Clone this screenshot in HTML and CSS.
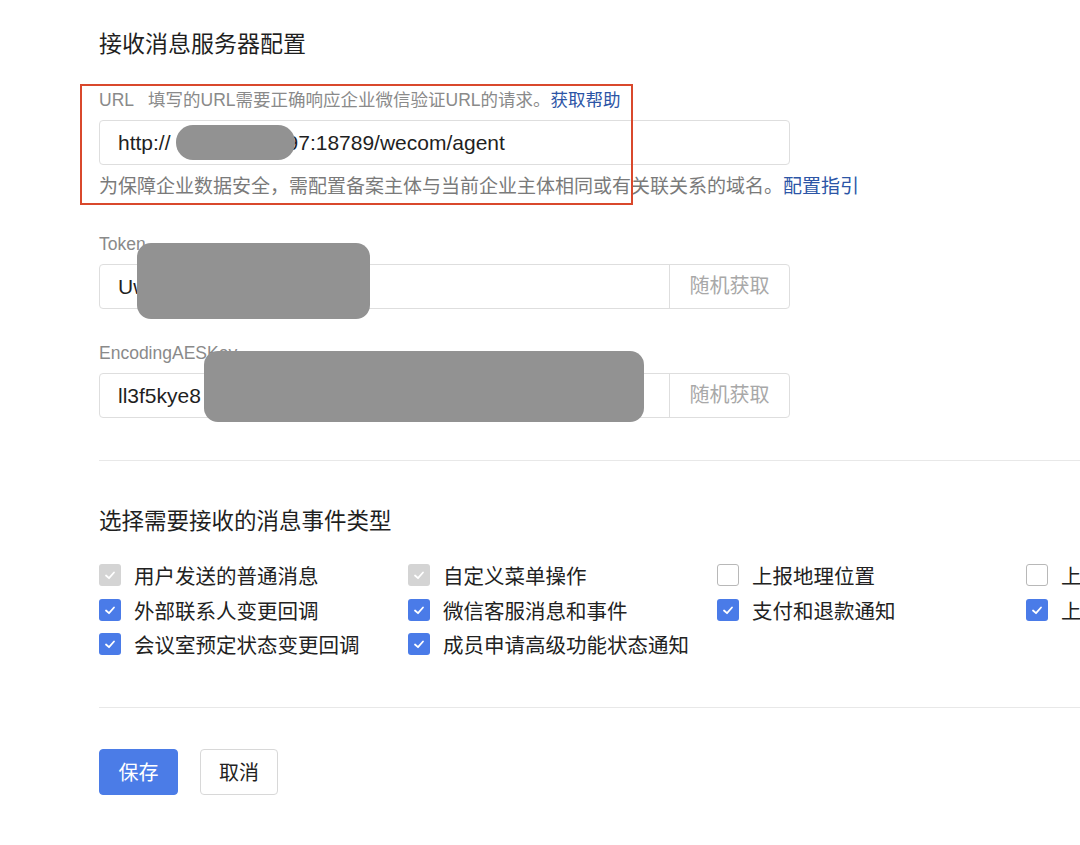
FILE: index.html
```html
<!DOCTYPE html>
<html lang="zh-CN">
<head>
<meta charset="utf-8">
<title>接收消息服务器配置</title>
<link rel="stylesheet" href="styles.css">
</head>
<body>
<div class="page">
  <h1 class="title">接收消息服务器配置</h1>

  <div class="field field-url">
    <div class="annot"></div>
    <div class="field-label"><span class="lbl-name">URL</span>填写的URL需要正确响应企业微信验证URL的请求。<a class="link">获取帮助</a></div>
    <div class="input-group">
      <div class="input-text">http://<span class="gap-text">xxxxxxxxxx</span>97:18789/wecom/agent</div>
      <div class="blob blob-url"></div>
    </div>
    <div class="helper">为保障企业数据安全，需配置备案主体与当前企业主体相同或有关联关系的域名。<a class="link">配置指引</a></div>
  </div>

  <div class="field field-token">
    <div class="field-label">Token</div>
    <div class="input-group">
      <div class="input-text">Uw</div>
      <div class="input-btn">随机获取</div>
    </div>
    <div class="blob blob-token"></div>
  </div>

  <div class="field field-aes">
    <div class="field-label">EncodingAESKey</div>
    <div class="input-group">
      <div class="input-text">ll3f5kye8</div>
      <div class="input-btn">随机获取</div>
    </div>
    <div class="blob blob-aes"></div>
  </div>

  <div class="divider divider-1"></div>

  <h2 class="subtitle">选择需要接收的消息事件类型</h2>

  <div class="checks">
    <label class="check"><span class="box box-disabled"><svg viewBox="0 0 22 22"><polyline points="7,11.5 10,14.2 15,8.5"/></svg></span><span>用户发送的普通消息</span></label>
    <label class="check"><span class="box box-disabled"><svg viewBox="0 0 22 22"><polyline points="7,11.5 10,14.2 15,8.5"/></svg></span><span>自定义菜单操作</span></label>
    <label class="check"><span class="box box-empty"></span><span>上报地理位置</span></label>
    <label class="check"><span class="box box-empty"></span><span>上报</span></label>

    <label class="check"><span class="box box-on"><svg viewBox="0 0 22 22"><polyline points="7,11.5 10,14.2 15,8.5"/></svg></span><span>外部联系人变更回调</span></label>
    <label class="check"><span class="box box-on"><svg viewBox="0 0 22 22"><polyline points="7,11.5 10,14.2 15,8.5"/></svg></span><span>微信客服消息和事件</span></label>
    <label class="check"><span class="box box-on"><svg viewBox="0 0 22 22"><polyline points="7,11.5 10,14.2 15,8.5"/></svg></span><span>支付和退款通知</span></label>
    <label class="check"><span class="box box-on"><svg viewBox="0 0 22 22"><polyline points="7,11.5 10,14.2 15,8.5"/></svg></span><span>上报</span></label>

    <label class="check"><span class="box box-on"><svg viewBox="0 0 22 22"><polyline points="7,11.5 10,14.2 15,8.5"/></svg></span><span>会议室预定状态变更回调</span></label>
    <label class="check"><span class="box box-on"><svg viewBox="0 0 22 22"><polyline points="7,11.5 10,14.2 15,8.5"/></svg></span><span>成员申请高级功能状态通知</span></label>
  </div>

  <div class="divider divider-2"></div>

  <div class="actions">
    <button class="btn btn-primary">保存</button>
    <button class="btn btn-default">取消</button>
  </div>
</div>
</body>
</html>
```

FILE: styles.css
```css
* { box-sizing: border-box; }

html, body {
  margin: 0;
  padding: 0;
  background: #ffffff;
  overflow: hidden;
}

body {
  width: 1080px;
  height: 845px;
  font-family: "Liberation Sans", "Noto Sans CJK SC", sans-serif;
  color: #222222;
}

.page {
  padding: 29px 0 0 99px;
  width: 1080px;
  overflow: hidden;
}

.title {
  margin: 0;
  font-size: 23px;
  line-height: 30px;
  font-weight: 400;
  color: #1f1f1f;
  white-space: nowrap;
}

.field {
  position: relative;
}

.field-url { margin-top: 31px; }
.field-token { margin-top: 36px; }
.field-aes { margin-top: 34px; }

.annot {
  position: absolute;
  left: -19px;
  top: -6px;
  width: 553px;
  height: 121px;
  border: 2px solid #d9482c;
  pointer-events: none;
  z-index: 3;
}

.field-label {
  font-size: 17.5px;
  line-height: 20px;
  color: #8a8a8a;
  white-space: nowrap;
}

.lbl-name { margin-right: 14px; }

.link {
  color: #2c55a6;
  text-decoration: none;
}

.input-group {
  position: relative;
  display: flex;
  width: 691px;
  height: 45px;
  margin-top: 10px;
  border: 1px solid #dedede;
  border-radius: 4px;
  background: #ffffff;
}

.input-text {
  flex: 1;
  padding-left: 18px;
  font-size: 21px;
  line-height: 43px;
  color: #1f1f1f;
  white-space: nowrap;
  overflow: hidden;
}

.gap-text {
  color: transparent;
  display: inline-block;
  width: 116px;
  overflow: hidden;
  vertical-align: top;
}

.input-btn {
  width: 120px;
  border-left: 1px solid #dedede;
  text-align: center;
  font-size: 20px;
  line-height: 43px;
  color: #a8a8a8;
}

.helper {
  margin-top: 11px;
  font-size: 19px;
  line-height: 22px;
  color: #7a7a7a;
  white-space: nowrap;
}

.blob {
  position: absolute;
  background: #929292;
  z-index: 2;
}

.blob-url {
  left: 76px;
  top: 4px;
  width: 119px;
  height: 35px;
  border-radius: 17px;
}

.blob-token {
  left: 38px;
  top: 9px;
  width: 233px;
  height: 76px;
  border-radius: 14px;
}

.blob-aes {
  left: 105px;
  top: 8px;
  width: 440px;
  height: 71px;
  border-radius: 14px;
}

.divider {
  border-top: 1px solid #e8e8e8;
  width: 981px;
}

.divider-1 { margin-top: 42px; }
.divider-2 { margin-top: 45px; }

.subtitle {
  margin: 47px 0 0 0;
  font-size: 22.5px;
  line-height: 28px;
  font-weight: 400;
  color: #1f1f1f;
  white-space: nowrap;
}

.checks {
  margin-top: 22px;
  display: grid;
  grid-template-columns: repeat(4, 309px);
  grid-auto-rows: 34.5px;
  width: 1236px;
}

.check {
  display: flex;
  align-items: center;
  gap: 13px;
  font-size: 20.5px;
  color: #222222;
  white-space: nowrap;
}

.box {
  flex: none;
  width: 22px;
  height: 22px;
  border-radius: 3px;
  display: block;
}

.box svg {
  display: block;
  width: 22px;
  height: 22px;
}

.box polyline {
  fill: none;
  stroke: #ffffff;
  stroke-width: 1.8;
  stroke-linecap: round;
  stroke-linejoin: round;
}

.box-disabled { background: #d4d4d4; }
.box-on { background: #4a7be8; }
.box-empty {
  background: #ffffff;
  border: 1px solid #b8b8b8;
}

.actions {
  margin-top: 41px;
  display: flex;
  gap: 22px;
}

.btn {
  height: 46px;
  border-radius: 4px;
  font-family: "Liberation Sans", "Noto Sans CJK SC", sans-serif;
  font-size: 20px;
  padding: 0;
  cursor: pointer;
}

.btn-primary {
  width: 79px;
  background: #4b7ce7;
  border: 1px solid #4b7ce7;
  color: #ffffff;
}

.btn-default {
  width: 78px;
  background: #ffffff;
  border: 1px solid #d8d8d8;
  color: #222222;
}
```
